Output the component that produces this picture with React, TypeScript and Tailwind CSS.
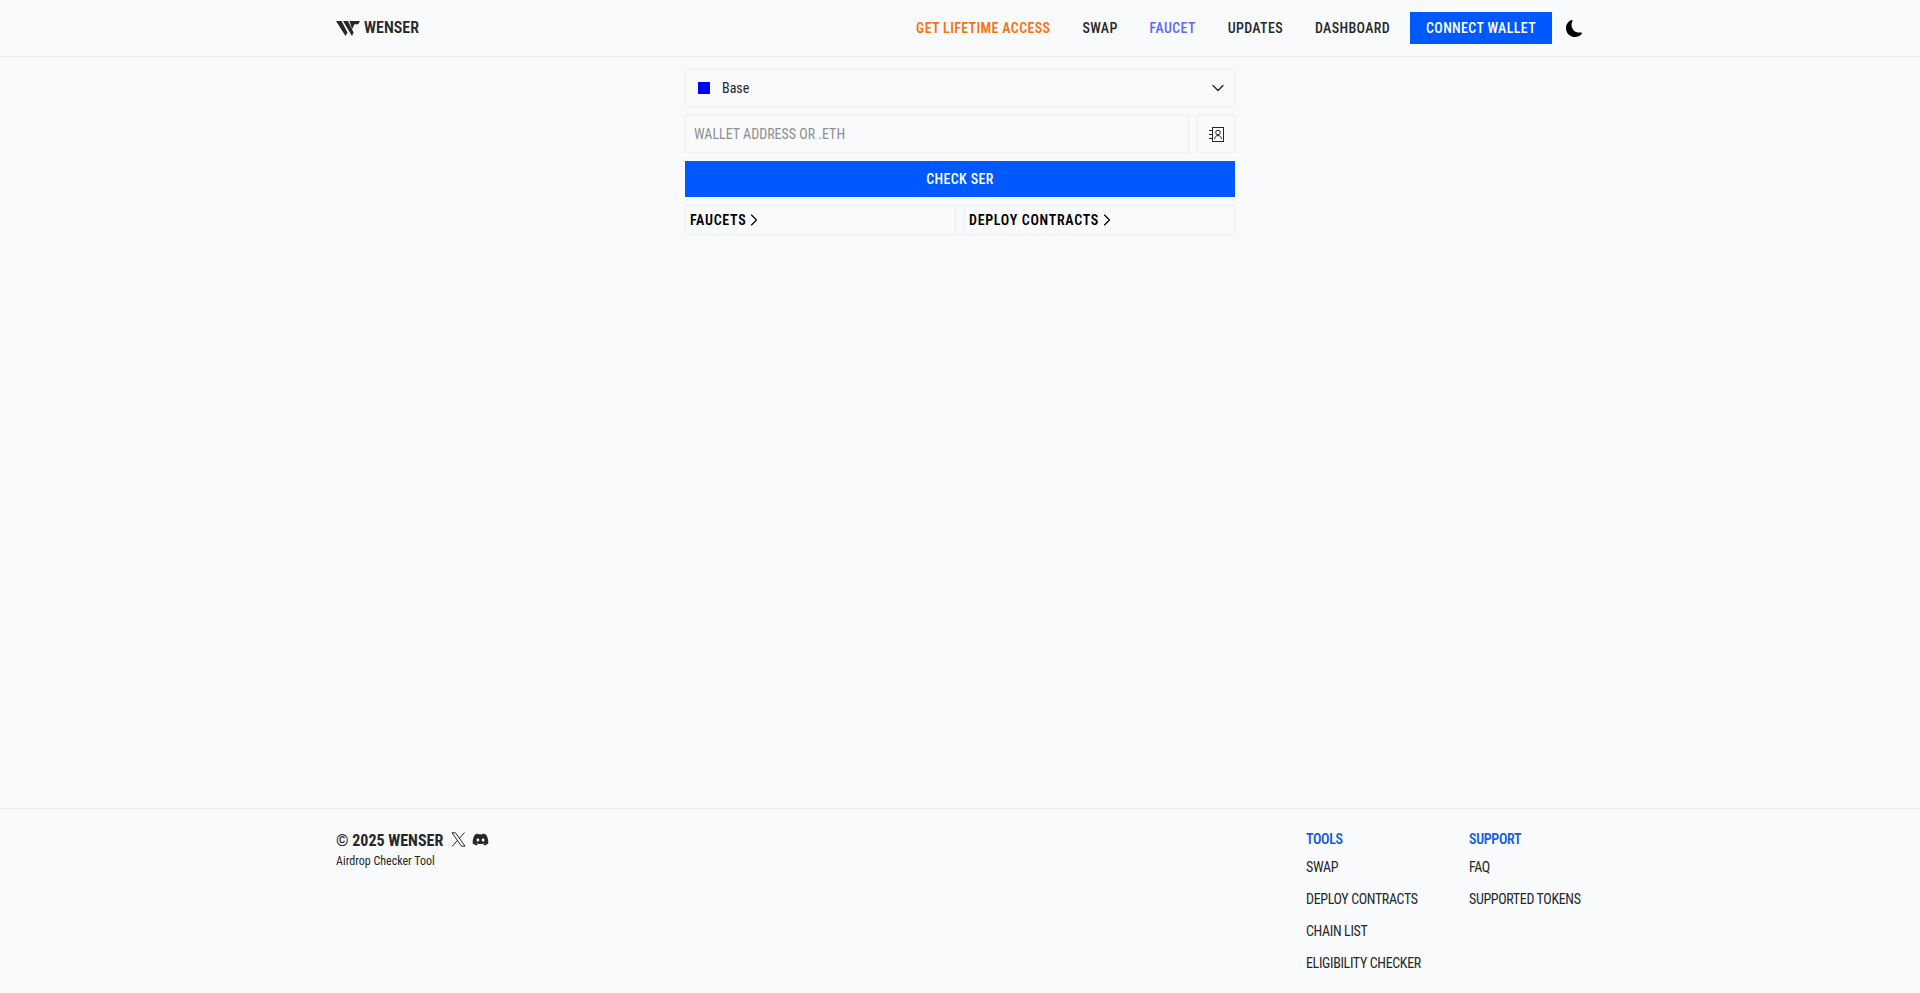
import { ChevronDown, ChevronRight } from 'lucide-react'
import { BsMoonFill } from 'react-icons/bs'
import { FaDiscord } from 'react-icons/fa'

const navLinks = [
    { label: 'GET LIFETIME ACCESS', className: 'text-[#f97316] font-semibold' },
    { label: 'SWAP', className: 'text-[#27272a] font-medium' },
    { label: 'FAUCET', className: 'text-[#6366f1] font-medium' },
    { label: 'UPDATES', className: 'text-[#27272a] font-medium' },
    { label: 'DASHBOARD', className: 'text-[#27272a] font-medium' },
]

const tools = ['SWAP', 'DEPLOY CONTRACTS', 'CHAIN LIST', 'ELIGIBILITY CHECKER']
const support = ['FAQ', 'SUPPORTED TOKENS']

function Logo() {
    return (
        <svg width="24" height="15" viewBox="0 0 24 15" fill="#27272a">
            <path d="M0 0h5.500l6 11.500-2 3.500z" />
            <path d="M7 0h5l5.500 11.500-1.500 3.500z" />
            <path d="M13.500 0H24l-1.800 3.200h-3.700l-2.500 5z" />
        </svg>
    )
}

function AddressBook() {
    return (
        <svg width="15" height="15" viewBox="0 0 15 15" fill="none" stroke="#27272a" strokeWidth="1">
            <rect x="3.500" y="0.500" width="11" height="14" />
            <circle cx="9" cy="5.500" r="2.300" />
            <path d="M5.500 12c.4-2.500 2-3.500 3.500-3.500s3.100 1 3.500 3.500" />
            <path d="M0 3.500h3M0 7.500h3M0 11.500h3" />
        </svg>
    )
}

function XLogo() {
    return (
        <svg width="15" height="15" viewBox="0 0 15 15" fill="none" stroke="#27272a" strokeWidth="1" className="-mt-1">
            <path d="M1 .8h3.500l9.500 13.400h-3.500z" />
            <path d="M13.500 .5 8.500 6.200M1 14.500l5.500-6.200" />
        </svg>
    )
}

export default function App() {
    return (
        <div
            className="min-h-[993px] flex flex-col bg-[#f8fafc] text-[#27272a] [font-stretch:75%]"
            style={{ fontFamily: 'Roboto, "Liberation Sans", sans-serif' }}
        >
            <header className="h-[57px] border-b border-[#e9edf2]">
                <div className="w-[1248px] h-full mx-auto flex items-center justify-between">
                    <div className="flex items-center gap-1">
                        <Logo />
                        <span className="text-base font-semibold">WENSER</span>
                    </div>
                    <nav className="flex items-center">
                        <div className="flex items-center gap-8 tracking-wide text-sm">
                            {navLinks.map((link) => (
                                <a key={link.label} className={link.className}>
                                    {link.label}
                                </a>
                            ))}
                        </div>
                        <button className="ml-5 h-8 w-[142px] bg-[#0058ff] text-white text-sm font-medium tracking-wide">
                            CONNECT WALLET
                        </button>
                        <BsMoonFill size={17} color="#000" className="ml-[14px] mr-px" />
                    </nav>
                </div>
            </header>

            <main className="flex-1 w-[550px] mx-auto pt-3 flex flex-col gap-2">
                <div className="h-[38px] border border-[#eceff3] flex items-center justify-between pl-3 pr-[6px]">
                    <div className="flex items-center gap-3 text-sm">
                        <span className="w-3 h-3 bg-[#0000ff]" />
                        Base
                    </div>
                    <ChevronDown size={20} strokeWidth={1.6} />
                </div>
                <div className="flex gap-2">
                    <input
                        placeholder="WALLET ADDRESS OR .ETH"
                        className="flex-1 h-[38px] border border-[#eceff3] px-2 text-sm placeholder:text-[#8f8f8f] bg-transparent"
                    />
                    <button className="w-[38px] h-[38px] border border-[#eceff3] flex items-center justify-center">
                        <AddressBook />
                    </button>
                </div>
                <button className="h-9 bg-[#0058ff] text-white text-sm font-medium tracking-wide">
                    CHECK SER
                </button>
                <div className="grid grid-cols-2 gap-2">
                    <a className="h-[30px] border border-[#eceff3] px-1 flex items-center text-sm font-semibold tracking-wider text-black">
                        FAUCETS
                        <ChevronRight size={20} strokeWidth={1.4} className="-ml-[2px]" />
                    </a>
                    <a className="h-[30px] border border-[#eceff3] px-1 flex items-center text-sm font-semibold tracking-wider text-black">
                        DEPLOY CONTRACTS
                        <ChevronRight size={20} strokeWidth={1.4} className="-ml-[2px]" />
                    </a>
                </div>
            </main>

            <footer className="h-[185px] border-t border-[#e9edf2]">
                <div className="w-[1248px] mx-auto pt-5 flex justify-between">
                    <div>
                        <div className="flex items-center gap-2">
                            <span className="text-base font-bold">© 2025 WENSER</span>
                            <XLogo />
                            <FaDiscord size={17} className="-mt-1 -ml-[2px]" />
                        </div>
                        <p className="text-xs">Airdrop Checker Tool</p>
                    </div>
                    <div className="flex">
                        <div className="w-[163px]">
                            <h4 className="text-sm tracking-tight font-semibold text-[#155ee0]">TOOLS</h4>
                            <ul className="mt-2 flex flex-col gap-3 text-sm tracking-tight leading-5">
                                {tools.map((item) => (
                                    <li key={item}>{item}</li>
                                ))}
                            </ul>
                        </div>
                        <div className="w-[115px]">
                            <h4 className="text-sm tracking-tight font-semibold text-[#155ee0]">SUPPORT</h4>
                            <ul className="mt-2 flex flex-col gap-3 text-sm tracking-tight leading-5">
                                {support.map((item) => (
                                    <li key={item}>{item}</li>
                                ))}
                            </ul>
                        </div>
                    </div>
                </div>
            </footer>
        </div>
    )
}
